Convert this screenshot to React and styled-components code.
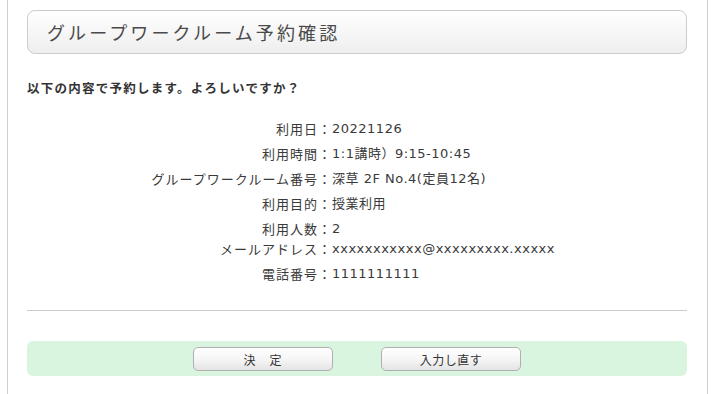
import React from "react";
import styled, { createGlobalStyle } from "styled-components";

const Global = createGlobalStyle`
  html, body { margin: 0; padding: 0; background: #fff; }
  body {
    font-family: "DejaVu Sans", "Noto Sans CJK JP", sans-serif;
    color: #333;
  }
`;

const Page = styled.div`
  box-sizing: border-box;
  width: 701px;
  min-height: 394px;
  margin-left: 7px;
  padding: 10px 20px 20px 19px;
  border-left: 1px solid #cfcfcf;
  border-right: 1px solid #cfcfcf;
`;

const TitleBox = styled.div`
  box-sizing: border-box;
  height: 44px;
  display: flex;
  align-items: center;
  padding-left: 19px;
  border: 1px solid #cccccc;
  border-radius: 8px;
  background: linear-gradient(#ffffff, #eeeeee);
`;

const Title = styled.h1`
  margin: 0;
  font-family: "Noto Sans CJK JP", sans-serif;
  font-weight: 400;
  font-size: 18px;
  letter-spacing: 3.1px;
  color: #4a4a4a;
  line-height: 1;
`;

const Lead = styled.p`
  margin: 24px 0 0;
  font-family: "Noto Sans CJK JP", sans-serif;
  font-weight: 700;
  font-size: 12.5px;
  letter-spacing: 1.25px;
  line-height: 20px;
  color: #333;
`;

const Details = styled.div`
  margin-top: 21px;
  display: flex;
  flex-direction: column;
`;

const Row = styled.div`
  display: grid;
  grid-template-columns: 305px 1fr;
  line-height: 20px;
  margin-top: ${(p) => (p.$tight ? "0" : "5px")};
  &:first-child { margin-top: 0; }
`;

const Label = styled.div`
  text-align: right;
  font-family: "Noto Sans CJK JP", sans-serif;
  font-size: 13px;
  letter-spacing: 1px;
  color: #3a3a3a;
  white-space: nowrap;
`;

const Value = styled.div`
  font-family: "DejaVu Sans", "Noto Sans CJK JP", sans-serif;
  font-size: 13px;
  letter-spacing: 0.5px;
  color: #3a3a3a;
  white-space: nowrap;
`;

const Rule = styled.hr`
  margin: 26px 0 0;
  border: none;
  border-top: 1px solid #cccccc;
`;

const ActionBar = styled.div`
  margin-top: 30px;
  height: 35px;
  box-sizing: border-box;
  padding-top: 6px;
  border-radius: 6px;
  background: #d9f5df;
  display: flex;
  justify-content: center;
  align-items: flex-start;
  gap: 48px;
`;

const Button = styled.button`
  box-sizing: border-box;
  width: 140px;
  height: 24px;
  padding: 0;
  border: 1px solid #b0b0b0;
  border-radius: 5px;
  background: linear-gradient(#ffffff 0%, #f6f6f6 50%, #e4e4e4 100%);
  font-family: "Noto Sans CJK JP", sans-serif;
  font-size: 12px;
  letter-spacing: ${(p) => (p.$spaced ? "1px" : "0.5px")};
  color: #333;
  cursor: pointer;
`;

const rows = [
  ["利用日：", "20221126"],
  ["利用時間：", "1:1講時）9:15-10:45"],
  ["グループワークルーム番号：", "深草 2F No.4(定員12名)"],
  ["利用目的：", "授業利用"],
  ["利用人数：", "2"],
  ["メールアドレス：", "xxxxxxxxxxx@xxxxxxxxx.xxxxx", true],
  ["電話番号：", "1111111111"],
];

export default function App() {
  return (
    <>
      <Global />
      <Page>
        <TitleBox>
          <Title>グループワークルーム予約確認</Title>
        </TitleBox>
        <Lead>以下の内容で予約します。よろしいですか？</Lead>
        <Details>
          {rows.map(([l, v, tight]) => (
            <Row key={l} $tight={tight}>
              <Label>{l}</Label>
              <Value>{v}</Value>
            </Row>
          ))}
        </Details>
        <Rule />
        <ActionBar>
          <Button $spaced>決　定</Button>
          <Button>入力し直す</Button>
        </ActionBar>
      </Page>
    </>
  );
}
